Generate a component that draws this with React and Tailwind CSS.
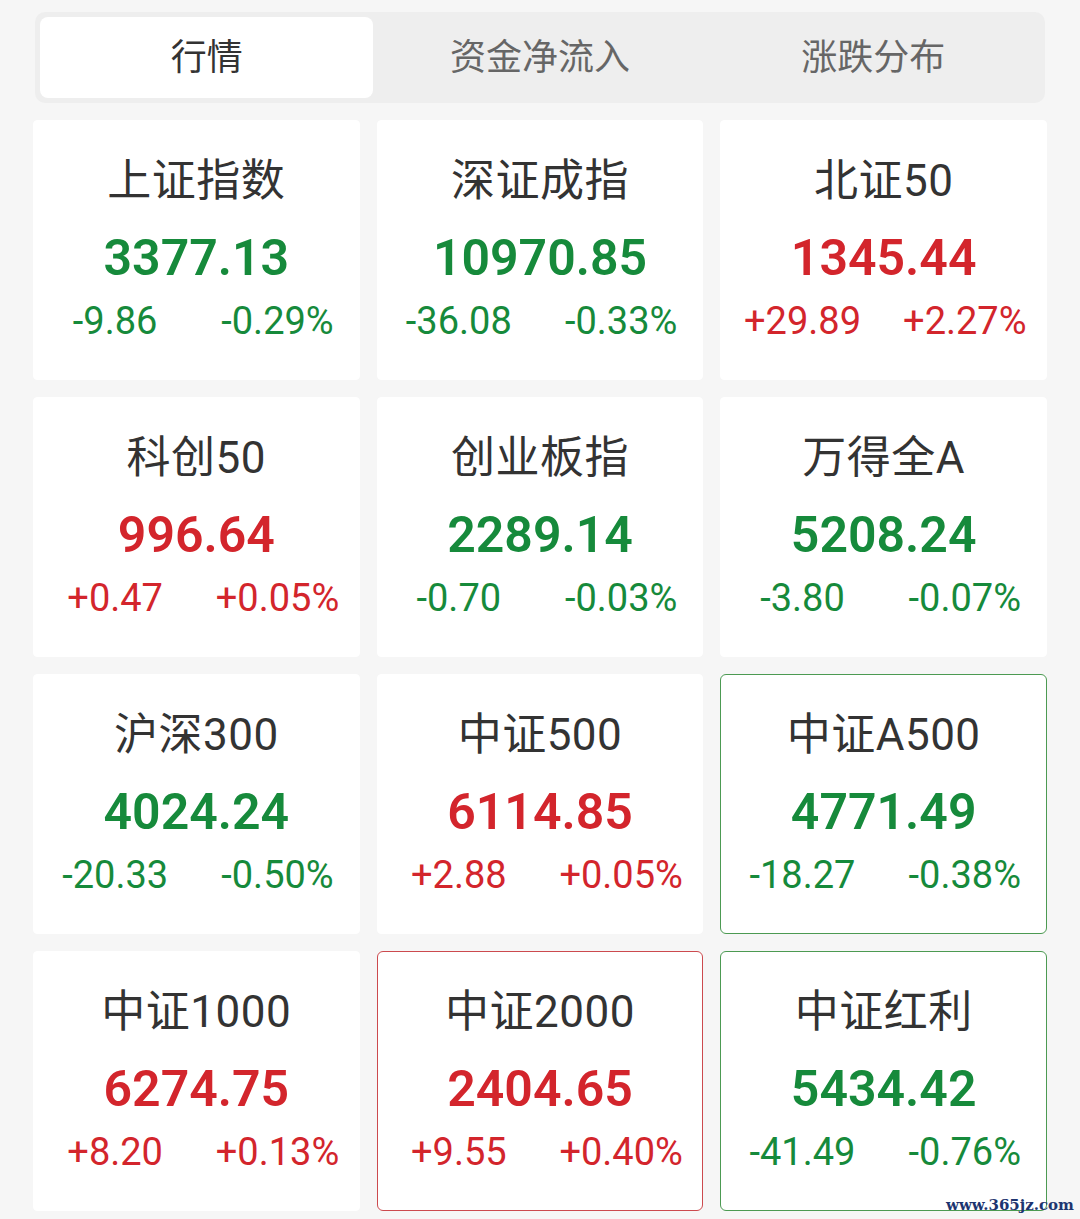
import React from "react";

const GREEN = "text-[#168a3b]";
const RED = "text-[#d3252c]";

const data = [
  { name: "上证指数", value: "3377.13", chg: "-9.86", pct: "-0.29%", up: false },
  { name: "深证成指", value: "10970.85", chg: "-36.08", pct: "-0.33%", up: false },
  { name: "北证50", value: "1345.44", chg: "+29.89", pct: "+2.27%", up: true },
  { name: "科创50", value: "996.64", chg: "+0.47", pct: "+0.05%", up: true },
  { name: "创业板指", value: "2289.14", chg: "-0.70", pct: "-0.03%", up: false },
  { name: "万得全A", value: "5208.24", chg: "-3.80", pct: "-0.07%", up: false },
  { name: "沪深300", value: "4024.24", chg: "-20.33", pct: "-0.50%", up: false },
  { name: "中证500", value: "6114.85", chg: "+2.88", pct: "+0.05%", up: true },
  { name: "中证A500", value: "4771.49", chg: "-18.27", pct: "-0.38%", up: false, border: "green" },
  { name: "中证1000", value: "6274.75", chg: "+8.20", pct: "+0.13%", up: true },
  { name: "中证2000", value: "2404.65", chg: "+9.55", pct: "+0.40%", up: true, border: "red" },
  { name: "中证红利", value: "5434.42", chg: "-41.49", pct: "-0.76%", up: false, border: "green" },
];

function Card({ item }) {
  const color = item.up ? RED : GREEN;
  const borderCls =
    item.border === "green"
      ? "border-[1.5px] border-[#4c9a52] rounded-[6px]"
      : item.border === "red"
      ? "border-[1.5px] border-[#cc4a4e] rounded-[6px]"
      : "border-[1.5px] border-white rounded-[4px]";
  return (
    <div className={`h-[260px] bg-white flex flex-col items-center ${borderCls}`}>
      <div className="mt-[32px] text-[44px] leading-[56px] text-[#333333] font-normal tracking-[0.5px]">
        {item.name}
      </div>
      <div className={`mt-[13px] text-[50px] leading-[72px] font-semibold ${color}`}>
        {item.value}
      </div>
      <div className={`mt-[3px] w-full grid grid-cols-2 text-[38px] leading-[48px] ${color}`}>
        <div className="text-center">{item.chg}</div>
        <div className="text-center">{item.pct}</div>
      </div>
    </div>
  );
}

export default function App() {
  const tabs = ["行情", "资金净流入", "涨跌分布"];
  return (
    <div
      className="relative w-[1080px] h-[1219px] bg-[#f6f6f6] px-[33px] pt-[12px] overflow-hidden"
      style={{ fontFamily: "Roboto, 'Noto Sans CJK SC', sans-serif" }}
    >
      <div className="h-[91px] mx-[2px] bg-[#eeeeee] rounded-[10px] p-[5px] grid grid-cols-3">
        {tabs.map((t, i) => (
          <div
            key={t}
            className={`flex items-center justify-center text-[36px] rounded-[8px] ${
              i === 0 ? "bg-white text-[#333333]" : "text-[#666666]"
            }`}
          >
            {t}
          </div>
        ))}
      </div>
      <div className="mt-[17px] grid grid-cols-3 gap-[17px]">
        {data.map((d) => (
          <Card key={d.name} item={d} />
        ))}
      </div>
      <div
        className="absolute right-[6px] bottom-[6px] text-[15px] font-bold text-[#1d3570] leading-none"
        style={{ fontFamily: "'DejaVu Serif', serif" }}
      >
        www.365jz.com
      </div>
    </div>
  );
}
